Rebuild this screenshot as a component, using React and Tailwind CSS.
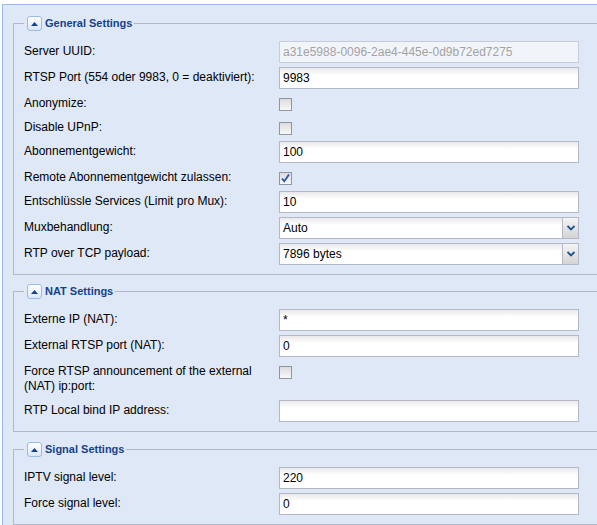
import React from "react";

const INPUT_BG = "bg-[linear-gradient(to_bottom,#e9e9e9_0px,#ffffff_7px)]";

const GENERAL = [
  { label: "Server UUID:", type: "text", value: "a31e5988-0096-2ae4-445e-0d9b72ed7275", disabled: true },
  { label: "RTSP Port (554 oder 9983, 0 = deaktiviert):", type: "text", value: "9983" },
  { label: "Anonymize:", type: "check", checked: false },
  { label: "Disable UPnP:", type: "check", checked: false },
  { label: "Abonnementgewicht:", type: "text", value: "100" },
  { label: "Remote Abonnementgewicht zulassen:", type: "check", checked: true },
  { label: "Entschlüssle Services (Limit pro Mux):", type: "text", value: "10" },
  { label: "Muxbehandlung:", type: "select", value: "Auto" },
  { label: "RTP over TCP payload:", type: "select", value: "7896 bytes" },
];

const NAT = [
  { label: "Externe IP (NAT):", type: "text", value: "*" },
  { label: "External RTSP port (NAT):", type: "text", value: "0" },
  { label: "Force RTSP announcement of the external (NAT) ip:port:", type: "check", checked: false },
  { label: "RTP Local bind IP address:", type: "text", value: "" },
];

const SIGNAL = [
  { label: "IPTV signal level:", type: "text", value: "220" },
  { label: "Force signal level:", type: "text", value: "0" },
];

const Field = ({ item }) => {
  if (item.type === "check") {
    return (
      <div className="pt-[5px]">
        <div className="w-[13px] h-[13px] border border-[#8f969f] bg-[linear-gradient(to_bottom,#dcdcdc,#f8f8f8)] flex items-center justify-center">
          {item.checked && (
            <svg width="11" height="11" viewBox="0 0 11 11">
              <path d="M2 5.5 L4.3 8.3 L9 1.5" fill="none" stroke="#2b54a8" strokeWidth="1.8" />
            </svg>
          )}
        </div>
      </div>
    );
  }

  if (item.type === "select") {
    return (
      <div className={`w-[300px] h-[22px] border border-[#b5b8c8] ${INPUT_BG} flex`}>
        <div className="flex-1 px-[3px] leading-[20px] text-[12px] text-black">{item.value}</div>
        <div className="w-[16px] h-full border-l border-[#b5b8c8] bg-[linear-gradient(to_bottom,#f4f4f4,#d4d4d4)] flex items-center justify-center">
          <svg width="8" height="6" viewBox="0 0 8 6">
            <path d="M0.5 1 L4 4.5 L7.5 1" fill="none" stroke="#1d4f94" strokeWidth="1.8" />
          </svg>
        </div>
      </div>
    );
  }

  return (
    <input
      type="text"
      readOnly
      disabled={item.disabled}
      value={item.value}
      className={`w-[300px] h-[22px] px-[3px] text-[12px] outline-none border ${
        item.disabled
          ? "border-[#c7ccda] bg-[#f1f5fa] text-[#a3a3a3]"
          : `border-[#b5b8c8] ${INPUT_BG} text-black`
      }`}
    />
  );
};

const Section = ({ title, items, className }) => (
  <fieldset className={`w-[700px] ml-[10px] border border-[#b5b8c8] pl-[10px] pb-[9px] ${className}`}>
    <legend className="pl-[3px] pr-[2px]">
      <div className="flex items-center gap-[3px] h-[15px]">
        <div className="w-[15px] h-[15px] rounded-[3px] border border-[#99bbe8] bg-[linear-gradient(to_bottom,#ffffff,#dbe6f6)] flex items-center justify-center">
          <svg width="7" height="4" viewBox="0 0 7 4">
            <path d="M0 4 L3.5 0 L7 4 Z" fill="#15428b" />
          </svg>
        </div>
        <span className="text-[11px] font-bold text-[#15428b]">{title}</span>
      </div>
    </legend>

    <div className="flex flex-col gap-[4px] pt-[10px]">
      {items.map((item) => (
        <div key={item.label} className="flex items-start min-h-[20px]">
          <label className="w-[255px] shrink-0 pr-[5px] pt-[3px] pb-[2px] leading-[15px] text-[12px] text-black">
            {item.label}
          </label>
          <Field item={item} />
        </div>
      ))}
    </div>
  </fieldset>
);

export default function App() {
  return (
    <div className="w-[597px] h-[525px] overflow-hidden bg-white font-['Liberation_Sans',Arial,sans-serif]">
      <div className="ml-[2px] mt-[4px] h-[600px] border-l border-t border-[#99bbe8] bg-[#dfe8f6] pt-[11px] overflow-hidden">
        <Section title="General Settings" items={GENERAL} className="mb-[9px]" />
        <Section title="NAT Settings" items={NAT} className="mb-[10px]" />
        <Section title="Signal Settings" items={SIGNAL} />
      </div>
    </div>
  );
}
